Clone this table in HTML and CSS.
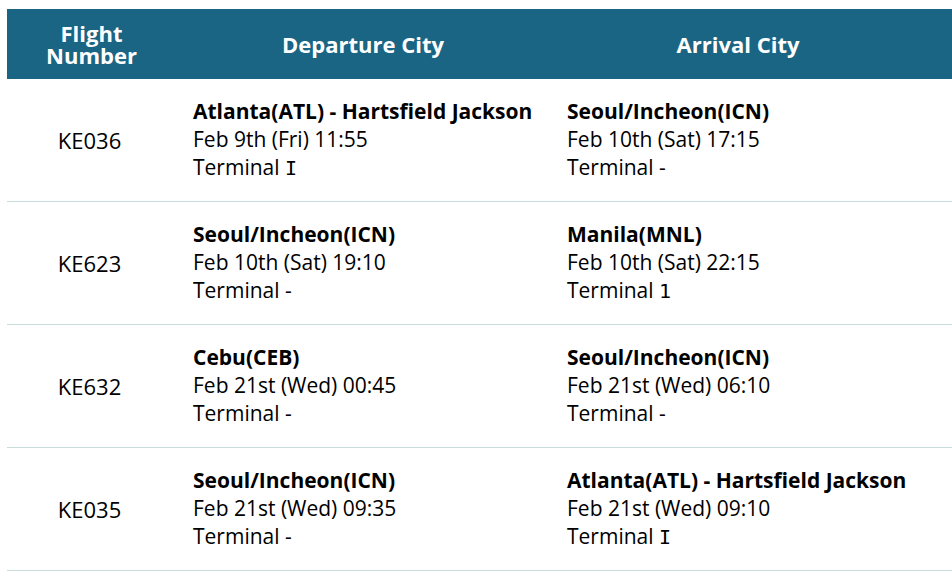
FILE: index.html
```html
<!DOCTYPE html>
<html>
<head>
<meta charset="utf-8">
<link rel="stylesheet" href="styles.css">
</head>
<body>
<div class="wrap">
<table class="flights">
  <thead>
    <tr>
      <th class="c-num">Flight<br>Number</th>
      <th class="c-dep">Departure City</th>
      <th class="c-arr">Arrival City</th>
    </tr>
  </thead>
  <tbody>
    <tr>
      <td class="num">KE036</td>
      <td class="city"><div class="name">Atlanta(ATL) - Hartsfield Jackson</div><div>Feb 9th (Fri) 11:55</div><div>Terminal <span class="term">I</span></div></td>
      <td class="city"><div class="name">Seoul/Incheon(ICN)</div><div>Feb 10th (Sat) 17:15</div><div>Terminal -</div></td>
    </tr>
    <tr>
      <td class="num">KE623</td>
      <td class="city"><div class="name">Seoul/Incheon(ICN)</div><div>Feb 10th (Sat) 19:10</div><div>Terminal -</div></td>
      <td class="city"><div class="name">Manila(MNL)</div><div>Feb 10th (Sat) 22:15</div><div>Terminal <span class="term">1</span></div></td>
    </tr>
    <tr>
      <td class="num">KE632</td>
      <td class="city"><div class="name">Cebu(CEB)</div><div>Feb 21st (Wed) 00:45</div><div>Terminal -</div></td>
      <td class="city"><div class="name">Seoul/Incheon(ICN)</div><div>Feb 21st (Wed) 06:10</div><div>Terminal -</div></td>
    </tr>
    <tr>
      <td class="num">KE035</td>
      <td class="city"><div class="name">Seoul/Incheon(ICN)</div><div>Feb 21st (Wed) 09:35</div><div>Terminal -</div></td>
      <td class="city"><div class="name">Atlanta(ATL) - Hartsfield Jackson</div><div>Feb 21st (Wed) 09:10</div><div>Terminal <span class="term">I</span></div></td>
    </tr>
  </tbody>
</table>
</div>
</body>
</html>
```
FILE: styles.css
```css
html, body {
  margin: 0;
  padding: 0;
  background: #fff;
}
body {
  padding: 9px 0 0 7px;
  font-family: "Open Sans", "Liberation Sans", sans-serif;
  color: #000;
}
.wrap {
  overflow: hidden;
}
.flights {
  width: 945px;
  border-collapse: collapse;
  table-layout: fixed;
}
.flights th {
  box-sizing: border-box;
  background: #1a6584;
  color: #fff;
  font-weight: 700;
  font-size: 22px;
  line-height: 22px;
  height: 70px;
  padding: 0;
  text-align: center;
  vertical-align: middle;
}
.c-num { width: 169px; }
.c-dep { width: 374px; }
.flights th.c-arr { width: 402px; padding-right: 26px; }
.flights td {
  border-bottom: 1px solid #c9dcdc;
  font-size: 21px;
  line-height: 28px;
  vertical-align: middle;
  padding: 18px 0 20px;
}
.flights td.num {
  text-align: center;
  font-size: 22px;
  padding: 19px 4px 19px 0;
}
.flights td.city {
  padding-left: 17px;
}
.name {
  font-weight: 700;
}
.term {
  font-family: "DejaVu Sans Mono", monospace;
  font-size: 20px;
  line-height: 1;
}
```
